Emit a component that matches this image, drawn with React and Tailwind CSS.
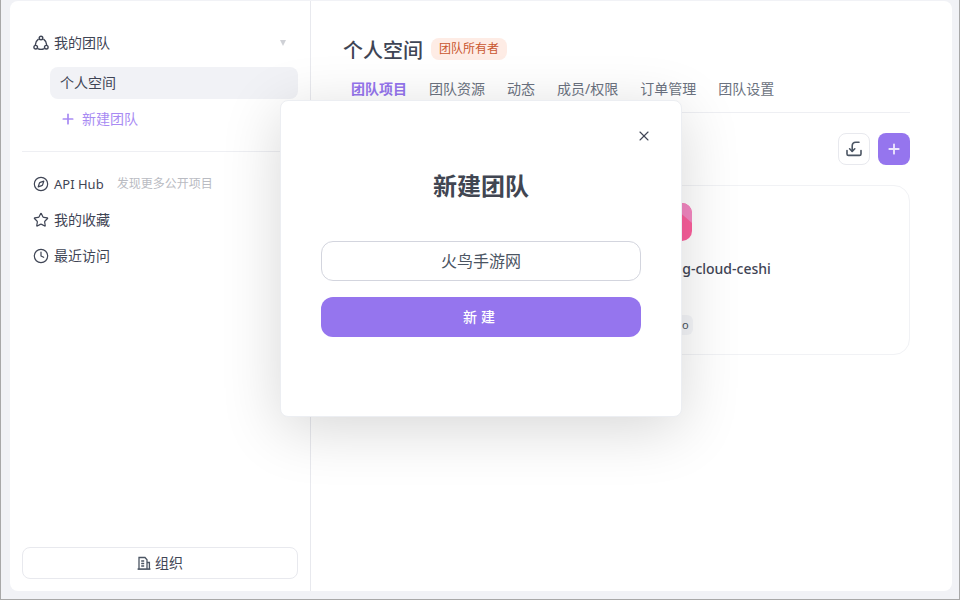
import { Compass, Star, Clock, Plus, X } from 'lucide-react';

const font = { fontFamily: '"Noto Sans", "Noto Sans CJK SC", sans-serif' };

function TeamIcon() {
    return (
        <svg width="16" height="16" viewBox="0 0 16 16" fill="none" stroke="#3f4555" strokeWidth="1.4" strokeLinecap="round">
            <circle cx="8" cy="3" r="1.8" />
            <circle cx="2.7" cy="12.2" r="1.8" />
            <circle cx="13.3" cy="12.2" r="1.8" />
            <path d="M5.2 4.4C3.6 5.6 2.4 7.6 2.4 9.6" />
            <path d="M10.8 4.4c1.6 1.2 2.8 3.2 2.8 5.2" />
            <path d="M5.2 13.8c1.8.7 3.8.7 5.6 0" />
        </svg>
    );
}

function ImportIcon() {
    return (
        <svg width="16" height="16" viewBox="0 0 16 16" fill="none" stroke="#4b5563" strokeWidth="1.6" strokeLinecap="round" strokeLinejoin="round">
            <path d="M1 9.5v3.4c0 .9.6 1.5 1.5 1.5h11c.9 0 1.5-.6 1.5-1.5V9.5" />
            <path d="M13 1.3H9.8C7.5 1.3 6.2 2.8 6.2 5v5.3" />
            <path d="M3.6 7.8l2.6 2.6 2.6-2.6" />
        </svg>
    );
}

function BuildingIcon() {
    return (
        <svg width="14" height="14" viewBox="0 0 14 14" fill="none" stroke="#4b5563" strokeWidth="1.3">
            <path d="M2 13V1.5h6l2 2.2V13" />
            <path d="M10 6.5h2.4V13" />
            <path d="M.6 13.1h12.8" strokeWidth="1.6" />
            <path d="M4.2 5h3M4.2 7.5h3M4.2 10h3" />
        </svg>
    );
}

function SideRow({ icon, children }) {
    return (
        <div className="flex h-9 items-center gap-[5px] pl-[11px] text-sm text-[#3f4555]">
            {icon}
            {children}
        </div>
    );
}

export default function App() {
    const tabs = ['团队资源', '动态', '成员/权限', '订单管理', '团队设置'];

    return (
        <div className="relative h-[600px] w-[960px] overflow-hidden border-x border-b border-[#a8a8a8] bg-[#f1f2f6] pt-px pr-[7px] pb-2 pl-[9px]" style={font}>
            <div className="flex h-[590px] rounded-lg bg-white">
                {/* Sidebar */}
                <aside className="flex w-[301px] flex-col border-r border-[#e8e9ee] px-3 pt-6 pb-3">
                    <div className="flex h-9 items-center gap-[5px] pl-[11px] text-sm text-[#3f4555]">
                        <TeamIcon />
                        <span className="flex-1">我的团队</span>
                        <span className="mr-3 h-0 w-0 border-x-[3.5px] border-t-[6px] border-x-transparent border-t-[#cfd1d6]" />
                    </div>
                    <div className="mt-[6px] ml-7 flex h-8 items-center rounded-lg bg-[#f1f2f6] pl-[10px] text-sm text-[#3f4555]">个人空间</div>
                    <div className="mt-[2px] ml-[38px] flex h-9 items-center gap-[6px] text-sm text-[#a88bf3]">
                        <Plus size={16} strokeWidth={2.6} />
                        新建团队
                    </div>
                    <div className="my-[14px] h-px bg-[#eeeff3]" />
                    <SideRow icon={<Compass size={16} color="#3f4555" strokeWidth={1.8} />}>
                        <span className="text-[13px]">API Hub</span>
                        <span className="ml-2 text-xs text-[#b9bbc2]">发现更多公开项目</span>
                    </SideRow>
                    <SideRow icon={<Star size={16} color="#3f4555" strokeWidth={1.8} />}>我的收藏</SideRow>
                    <SideRow icon={<Clock size={16} color="#3f4555" strokeWidth={1.8} />}>最近访问</SideRow>
                    <div className="mt-auto flex h-8 items-center justify-center gap-1 rounded-lg border border-[#e8e9ee] text-sm text-[#3f4555]">
                        <BuildingIcon />
                        组织
                    </div>
                </aside>

                {/* Main */}
                <main className="flex-1 pt-[36px] pr-[42px] pl-8">
                    <div className="flex h-[28px] items-center gap-2">
                        <h1 className="text-xl leading-7 font-medium text-[#3f4555]">个人空间</h1>
                        <span className="mt-px flex h-[22px] items-center self-start rounded-lg bg-[#feece5] px-2 text-xs text-[#c9562f]">团队所有者</span>
                    </div>
                    <div className="mt-[11px] flex h-[37px] items-start gap-[22px] border-b border-[#eeeff3] pt-px pl-2 text-sm leading-[24px] text-[#6b7280]">
                        <span className="font-semibold text-[#9575ee]">团队项目</span>
                        {tabs.map((tab) => (
                            <span key={tab}>{tab}</span>
                        ))}
                    </div>
                    <div className="mt-5 flex justify-end gap-2">
                        <button className="flex h-8 w-8 items-center justify-center rounded-lg border border-[#e8e9ee] bg-white">
                            <ImportIcon />
                        </button>
                        <button className="flex h-8 w-8 items-center justify-center rounded-lg bg-[#9575ee] text-[#ece6fd]">
                            <Plus size={16} strokeWidth={2.8} />
                        </button>
                    </div>
                    <div className="mt-5 grid grid-cols-2 gap-3">
                        <div />
                        <div className="h-[170px] rounded-2xl border border-[#f1f2f5] px-5 pt-[17px]">
                            <div className="h-[38px] w-[38px] overflow-hidden rounded-[10px] bg-[#fb5f9c]">
                                <svg width="38" height="38" viewBox="0 0 38 38">
                                    <path d="M0 0h38v20L22 6 0 0z" fill="#f488c2" />
                                </svg>
                            </div>
                            <div className="mt-[18px] text-sm leading-5 font-medium text-[#3f4555]">xiong-cloud-ceshi</div>
                            <span className="mt-[36px] inline-block rounded-md bg-[#f5f6f9] px-1 text-[11px] leading-5 text-[#4b5563]">Demo</span>
                        </div>
                    </div>
                </main>
            </div>

            {/* Modal */}
            <div className="absolute top-[100px] left-[279px] h-[317px] w-[402px] rounded-lg border border-[#eceef2] bg-white px-10 shadow-[0_12px_60px_rgba(0,0,0,0.16)]">
                <button className="absolute top-[27px] right-[29px] text-[#3f4555]">
                    <X size={16} strokeWidth={1.6} />
                </button>
                <h2 className="mt-[67px] text-center text-2xl leading-9 font-bold text-[#414652]">新建团队</h2>
                <div className="mt-[37px] flex h-10 items-center justify-center rounded-xl border border-[#d3d5de] text-base text-[#4b5563]">火鸟手游网</div>
                <button className="mt-4 flex h-10 w-full items-center justify-center rounded-xl bg-[#9575ee] text-sm font-medium tracking-[4px] text-white">新建</button>
            </div>
        </div>
    );
}
